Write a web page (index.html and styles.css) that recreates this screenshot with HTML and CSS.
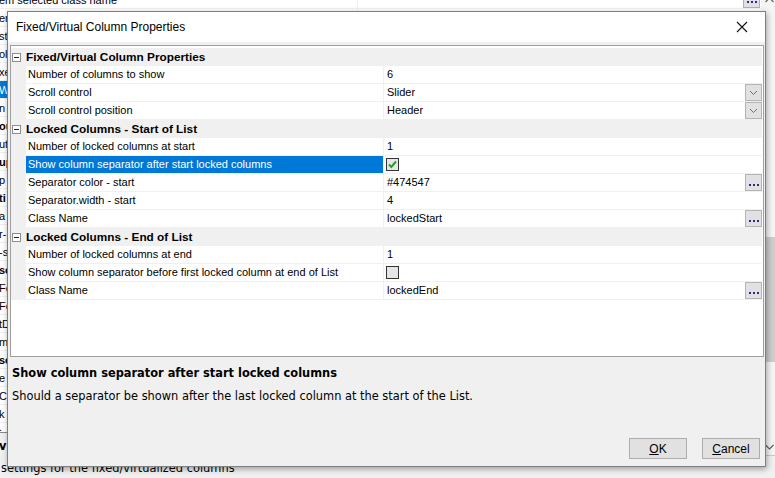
FILE: index.html
```html
<!DOCTYPE html>
<html>
<head>
<meta charset="utf-8">
<link rel="stylesheet" href="styles.css">
</head>
<body>
<div class="desk">
  <div class="bgwin">
    <div class="bgmain">
      <div class="bggrid">
        <div class="bgrow"><span class="bglabel">em selected class name</span><span class="bgvalue"><span class="ellipsis"><svg width="15" height="15" viewBox="0 0 15 15"><rect x="3" y="9" width="2" height="2" fill="#2b2b8c"/><rect x="7" y="9" width="2" height="2" fill="#2b2b8c"/><rect x="11" y="9" width="2" height="2" fill="#2b2b8c"/></svg></span></span></div>
        <div class="bgrow"><span class="bglabel">en</span></div>
        <div class="bgrow"><span class="bglabel">st</span></div>
        <div class="bgrow"><span class="bglabel">ol</span></div>
        <div class="bgrow"><span class="bglabel">xe</span></div>
        <div class="bgrow"><span class="bglabel sel">W</span></div>
        <div class="bgrow"><span class="bglabel">n</span></div>
        <div class="bgrow"><span class="bglabel b">ou</span></div>
        <div class="bgrow"><span class="bglabel">ut</span></div>
        <div class="bgrow"><span class="bglabel b">up</span></div>
        <div class="bgrow"><span class="bglabel">p</span></div>
        <div class="bgrow"><span class="bglabel b">ti</span></div>
        <div class="bgrow"><span class="bglabel">a</span></div>
        <div class="bgrow"><span class="bglabel">r-</span></div>
        <div class="bgrow"><span class="bglabel">-s</span></div>
        <div class="bgrow"><span class="bglabel b">sc</span></div>
        <div class="bgrow"><span class="bglabel">Fo</span></div>
        <div class="bgrow"><span class="bglabel">Fo</span></div>
        <div class="bgrow"><span class="bglabel">tD</span></div>
        <div class="bgrow"><span class="bglabel">m</span></div>
        <div class="bgrow"><span class="bglabel b">sc</span></div>
        <div class="bgrow"><span class="bglabel">e</span></div>
        <div class="bgrow"><span class="bglabel">C</span></div>
        <div class="bgrow"><span class="bglabel">k</span></div>
        <div class="bgrow short"><span class="bglabel">.</span></div>
      </div>
      <div class="bgdesc">
        <div class="bgdesc-title">v</div>
        <div class="bgdesc-text">settings for the fixed/virtualized columns</div>
      </div>
    </div>
    <div class="bgscroll">
      <div class="sb-arrow"><svg width="9" height="6" viewBox="0 0 9 6"><polyline points="0.5,5 4.5,1 8.5,5" fill="none" stroke="#606060" stroke-width="1.2"/></svg></div>
      <div class="sb-track1"></div>
      <div class="sb-thumb"></div>
      <div class="sb-track2"></div>
      <div class="sb-arrow"><svg width="9" height="6" viewBox="0 0 9 6"><polyline points="0.5,1 4.5,5 8.5,1" fill="none" stroke="#606060" stroke-width="1.2"/></svg></div>
    </div>
  </div>

  <div class="dialog">
    <div class="titlebar">
      <span class="title">Fixed/Virtual Column Properties</span>
      <span class="close"><svg width="12" height="12" viewBox="0 0 12 12"><path d="M1 1 L11 11 M11 1 L1 11" stroke="#111" stroke-width="1.1" fill="none"/></svg></span>
    </div>
    <div class="body">
      <div class="pgrid">
        <div class="cat"><span class="gut"><svg width="9" height="9" viewBox="0 0 9 9"><rect x="0.5" y="0.5" width="8" height="8" fill="#fff" stroke="#8e8e8e"/><path d="M2 4.5 H7" stroke="#222" stroke-width="1"/></svg></span><span class="cat-name">Fixed/Virtual Column Properties</span></div>
        <div class="prow"><span class="gut"></span><span class="lbl">Number of columns to show</span><span class="val">6</span></div>
        <div class="prow"><span class="gut"></span><span class="lbl">Scroll control</span><span class="val"><span class="vtext">Slider</span><span class="btn drop"><svg width="9" height="6" viewBox="0 0 9 6"><polyline points="1,1 4.5,4.5 8,1" fill="none" stroke="#707070" stroke-width="1"/></svg></span></span></div>
        <div class="prow"><span class="gut"></span><span class="lbl">Scroll control position</span><span class="val"><span class="vtext">Header</span><span class="btn drop"><svg width="9" height="6" viewBox="0 0 9 6"><polyline points="1,1 4.5,4.5 8,1" fill="none" stroke="#707070" stroke-width="1"/></svg></span></span></div>
        <div class="cat"><span class="gut"><svg width="9" height="9" viewBox="0 0 9 9"><rect x="0.5" y="0.5" width="8" height="8" fill="#fff" stroke="#8e8e8e"/><path d="M2 4.5 H7" stroke="#222" stroke-width="1"/></svg></span><span class="cat-name">Locked Columns - Start of List</span></div>
        <div class="prow"><span class="gut"></span><span class="lbl">Number of locked columns at start</span><span class="val">1</span></div>
        <div class="prow"><span class="gut"></span><span class="lbl selected">Show column separator after start locked columns</span><span class="val"><span class="chk"><svg width="11" height="11" viewBox="0 0 11 11"><polyline points="2,5.5 4.3,8 9,2.5" fill="none" stroke="#2e9b2e" stroke-width="2"/></svg></span></span></div>
        <div class="prow"><span class="gut"></span><span class="lbl">Separator color - start</span><span class="val"><span class="vtext">#474547</span><span class="btn"><svg width="15" height="15" viewBox="0 0 15 15"><rect x="3" y="9" width="2" height="2" fill="#2b2b8c"/><rect x="7" y="9" width="2" height="2" fill="#2b2b8c"/><rect x="11" y="9" width="2" height="2" fill="#2b2b8c"/></svg></span></span></div>
        <div class="prow"><span class="gut"></span><span class="lbl">Separator.width - start</span><span class="val">4</span></div>
        <div class="prow"><span class="gut"></span><span class="lbl">Class Name</span><span class="val"><span class="vtext">lockedStart</span><span class="btn"><svg width="15" height="15" viewBox="0 0 15 15"><rect x="3" y="9" width="2" height="2" fill="#2b2b8c"/><rect x="7" y="9" width="2" height="2" fill="#2b2b8c"/><rect x="11" y="9" width="2" height="2" fill="#2b2b8c"/></svg></span></span></div>
        <div class="cat"><span class="gut"><svg width="9" height="9" viewBox="0 0 9 9"><rect x="0.5" y="0.5" width="8" height="8" fill="#fff" stroke="#8e8e8e"/><path d="M2 4.5 H7" stroke="#222" stroke-width="1"/></svg></span><span class="cat-name">Locked Columns - End of List</span></div>
        <div class="prow"><span class="gut"></span><span class="lbl">Number of locked columns at end</span><span class="val">1</span></div>
        <div class="prow"><span class="gut"></span><span class="lbl">Show column separator before first locked column at end of List</span><span class="val"><span class="chk"></span></span></div>
        <div class="prow"><span class="gut"></span><span class="lbl">Class Name</span><span class="val"><span class="vtext">lockedEnd</span><span class="btn"><svg width="15" height="15" viewBox="0 0 15 15"><rect x="3" y="9" width="2" height="2" fill="#2b2b8c"/><rect x="7" y="9" width="2" height="2" fill="#2b2b8c"/><rect x="11" y="9" width="2" height="2" fill="#2b2b8c"/></svg></span></span></div>
      </div>
      <div class="desc">
        <div class="desc-title">Show column separator after start locked columns</div>
        <div class="desc-text">Should a separator be shown after the last locked column at the start of the List.</div>
      </div>
      <div class="footer">
        <button class="dbtn"><u>O</u>K</button>
        <button class="dbtn"><u>C</u>ancel</button>
      </div>
    </div>
  </div>
</div>
</body>
</html>
```
FILE: styles.css
```css
html, body {
  margin: 0;
  padding: 0;
}
.desk {
  position: relative;
  width: 775px;
  height: 478px;
  overflow: hidden;
  background: #f0f0f0;
  font-family: "Liberation Sans", Arial, sans-serif;
  font-size: 11px;
  color: #000;
}

/* background window */
.bgwin {
  position: absolute;
  left: 0;
  top: -9px;
  width: 778px;
  height: 487px;
  display: flex;
}
.bgmain {
  flex: 1;
  display: flex;
  flex-direction: column;
}
.bggrid {
  height: 441px;
  background: #fff;
  border-bottom: 1px solid #8a8a8a;
  display: flex;
  flex-direction: column;
}
.bgrow {
  height: 17px;
  border-bottom: 1px solid #f0f0f0;
  display: flex;
  line-height: 18px;
}
.bgrow.short {
  height: 9px;
  border-bottom: none;
  line-height: 9px;
}
.bglabel {
  width: 357px;
  padding-left: 0;
  text-indent: -1px;
  border-right: 1px solid #f0f0f0;
  white-space: nowrap;
  overflow: hidden;
}
.bglabel.b {
  font-weight: bold;
}
.bglabel.sel {
  background: #0078d7;
  color: #fff;
}
.bgvalue {
  flex: 1;
  display: flex;
  justify-content: flex-end;
  padding-right: 1px;
}
.ellipsis {
  width: 15px;
  height: 15px;
  border: 1px solid #b0b0b0;
  background: #e1e1e1;
  display: flex;
}
.bgdesc {
  padding-left: 0;
  font-family: "DejaVu Sans", Verdana, sans-serif;
  font-size: 11.4px;
}
.bgdesc-title {
  font-weight: bold;
  margin-top: 6px;
  line-height: 14px;
  text-indent: -1px;
}
.bgdesc-text {
  margin-top: 8px;
  line-height: 14px;
  padding-left: 1px;
}
.bgscroll {
  width: 17px;
  height: 464px;
  display: flex;
  flex-direction: column;
  background: #f5f5f5;
  border-bottom: 1px solid #c8c8c8;
}
.sb-arrow {
  height: 17px;
  display: flex;
  align-items: center;
  justify-content: flex-start;
  padding-left: 4px;
}
.sb-track1 {
  height: 229px;
}
.sb-thumb {
  height: 125px;
  background: #cdcdcd;
}
.sb-track2 {
  flex: 1;
}

/* dialog */
.dialog {
  position: absolute;
  left: 7px;
  top: 11px;
  width: 759px;
  height: 456px;
  box-sizing: border-box;
  border: 1px solid #7f7f7f;
  background: #f0f0f0;
  box-shadow: 1px 2px 6px rgba(0, 0, 0, 0.35);
  display: flex;
  flex-direction: column;
}
.titlebar {
  height: 30px;
  flex: none;
  background: #fff;
  display: flex;
  align-items: center;
  justify-content: space-between;
  padding-left: 8px;
}
.title {
  font-size: 12px;
  color: #000;
}
.close {
  width: 46px;
  height: 30px;
  display: flex;
  align-items: center;
  justify-content: center;
}
.body {
  flex: 1;
  display: flex;
  flex-direction: column;
  padding: 3px 1px 0 2px;
}
.pgrid {
  height: 312px;
  box-sizing: border-box;
  border: 1px solid #a0a0a0;
  background: #fff;
  padding: 2px 1px 0 0;
  display: flex;
  flex-direction: column;
}
.cat {
  height: 18px;
  flex: none;
  background: #f0f0f0;
  display: flex;
  align-items: center;
}
.gut {
  width: 15px;
  height: 18px;
  flex: none;
  background: #f0f0f0;
  display: flex;
  align-items: center;
  padding-left: 1px;
  box-sizing: border-box;
}
.cat-name {
  font-weight: bold;
  font-size: 11.8px;
  line-height: 18px;
}
.prow {
  height: 18px;
  flex: none;
  display: flex;
}
.lbl {
  width: 358px;
  flex: none;
  box-sizing: border-box;
  height: 18px;
  line-height: 17px;
  padding-left: 2px;
  border-bottom: 1px solid #f0f0f0;
  border-right: 1px solid #f0f0f0;
  white-space: nowrap;
  overflow: hidden;
}
.lbl.selected {
  background: #0078d7;
  color: #fff;
}
.val {
  flex: 1;
  box-sizing: border-box;
  height: 18px;
  line-height: 17px;
  padding-left: 3px;
  border-bottom: 1px solid #f0f0f0;
  display: flex;
  justify-content: space-between;
  align-items: flex-start;
}
.btn {
  width: 17px;
  height: 17px;
  box-sizing: border-box;
  border: 1px solid #b4b4b4;
  background: #e1e1e1;
  display: flex;
  align-items: center;
  justify-content: center;
}
.btn.drop svg {
  margin-top: 1px;
}
.chk {
  width: 13px;
  height: 13px;
  box-sizing: border-box;
  margin: 2px 0 0 -1px;
  border: 1px solid #333;
  background: #e6e6e6;
  display: flex;
  align-items: center;
  justify-content: center;
}
.desc {
  padding-left: 2px;
  font-family: "DejaVu Sans", Verdana, sans-serif;
  font-size: 11.4px;
}
.desc-title {
  font-weight: bold;
  line-height: 14px;
  margin-top: 9px;
}
.desc-text {
  line-height: 14px;
  margin-top: 9px;
}
.footer {
  margin-top: auto;
  display: flex;
  justify-content: flex-end;
  gap: 15px;
  padding: 0 4px 7px 0;
}
.dbtn {
  width: 58px;
  height: 21px;
  box-sizing: border-box;
  border: 1px solid #adadad;
  background: #e1e1e1;
  font-family: "Liberation Sans", Arial, sans-serif;
  font-size: 12px;
  color: #000;
  padding: 0;
  margin: 0;
}
```
